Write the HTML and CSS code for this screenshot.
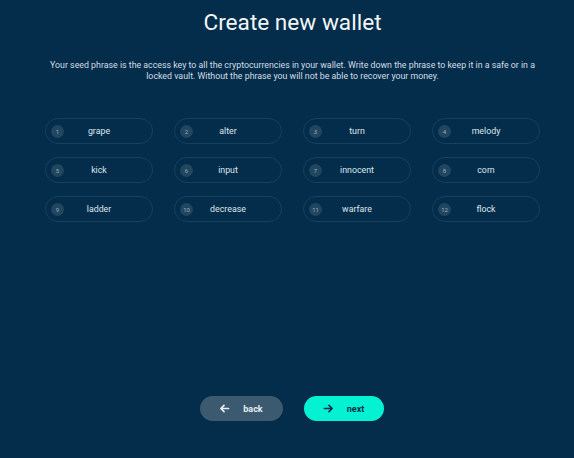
FILE: index.html
```html
<!DOCTYPE html>
<html>
<head>
<meta charset="utf-8">
<link rel="stylesheet" href="styles.css">
</head>
<body>
<main class="page">
  <h1 class="title">Create new wallet</h1>
  <p class="lead">Your seed phrase is the access key to all the cryptocurrencies in your wallet. Write down the phrase to keep it in a safe or in a locked vault. Without the phrase you will not be able to recover your money.</p>
  <ol class="words">
    <li class="word"><span class="num">1</span><span class="text">grape</span></li>
    <li class="word"><span class="num">2</span><span class="text">alter</span></li>
    <li class="word"><span class="num">3</span><span class="text">turn</span></li>
    <li class="word"><span class="num">4</span><span class="text">melody</span></li>
    <li class="word"><span class="num">5</span><span class="text">kick</span></li>
    <li class="word"><span class="num">6</span><span class="text">input</span></li>
    <li class="word"><span class="num">7</span><span class="text">innocent</span></li>
    <li class="word"><span class="num">8</span><span class="text">corn</span></li>
    <li class="word"><span class="num">9</span><span class="text">ladder</span></li>
    <li class="word"><span class="num">10</span><span class="text">decrease</span></li>
    <li class="word"><span class="num">11</span><span class="text">warfare</span></li>
    <li class="word"><span class="num">12</span><span class="text">flock</span></li>
  </ol>
  <div class="actions">
    <button class="btn btn-back">
      <svg class="ico" viewBox="0 0 12 12" width="11" height="11"><path d="M10.5 6H2M5.5 2.5L2 6l3.5 3.5" fill="none" stroke="currentColor" stroke-width="1.8" stroke-linecap="round" stroke-linejoin="round"/></svg>
      <span>back</span>
    </button>
    <button class="btn btn-next">
      <svg class="ico" viewBox="0 0 12 12" width="11" height="11"><path d="M1.5 6H10M6.5 2.5L10 6l-3.5 3.5" fill="none" stroke="currentColor" stroke-width="1.8" stroke-linecap="round" stroke-linejoin="round"/></svg>
      <span>next</span>
    </button>
  </div>
</main>
</body>
</html>
```
FILE: styles.css
```css
html, body {
  margin: 0;
  padding: 0;
  background: #032d4a;
}
body {
  font-family: Roboto, "Liberation Sans", sans-serif;
  color: #e8eef3;
  width: 574px;
  height: 458px;
  overflow: hidden;
}
.page {
  box-sizing: border-box;
  display: flex;
  flex-direction: column;
  align-items: center;
  height: 458px;
  padding-left: 11px;
}
.title {
  margin: 8px 0 0;
  font-size: 22.6px;
  font-weight: 400;
  line-height: 30px;
  color: #f2f6f9;
}
.lead {
  margin: 22px 0 0;
  width: 500px;
  font-size: 8.8px;
  line-height: 11px;
  text-align: center;
  color: #d5dee6;
}
.words {
  list-style: none;
  margin: 36px 0 0;
  padding: 0;
  display: grid;
  grid-template-columns: repeat(4, 108px);
  column-gap: 21px;
  row-gap: 13px;
}
.word {
  box-sizing: border-box;
  height: 26px;
  border: 1px solid #16405d;
  border-radius: 13px;
  display: flex;
  align-items: center;
  padding-left: 5px;
}
.num {
  width: 13px;
  height: 13px;
  border-radius: 50%;
  background: #21465f;
  color: #9aadbc;
  font-size: 6px;
  display: flex;
  align-items: center;
  justify-content: center;
  flex: none;
}
.text {
  flex: 1;
  text-align: center;
  font-size: 8.8px;
  color: #dfe7ee;
  padding-right: 18px;
}
.actions {
  margin-top: auto;
  margin-bottom: 37px;
  margin-right: 2px;
  display: flex;
  gap: 21px;
}
.btn {
  height: 25px;
  border: none;
  border-radius: 13px;
  display: flex;
  align-items: center;
  justify-content: center;
  gap: 13px;
  font-family: Roboto, "Liberation Sans", sans-serif;
  font-weight: 700;
  font-size: 9px;
  padding: 0;
}
.btn-back {
  width: 83px;
  background: #3b5a70;
  color: #e6edf2;
}
.btn-next {
  width: 80px;
  background: #05f2d2;
  color: #0a2f48;
}
.ico {
  display: block;
}
```
